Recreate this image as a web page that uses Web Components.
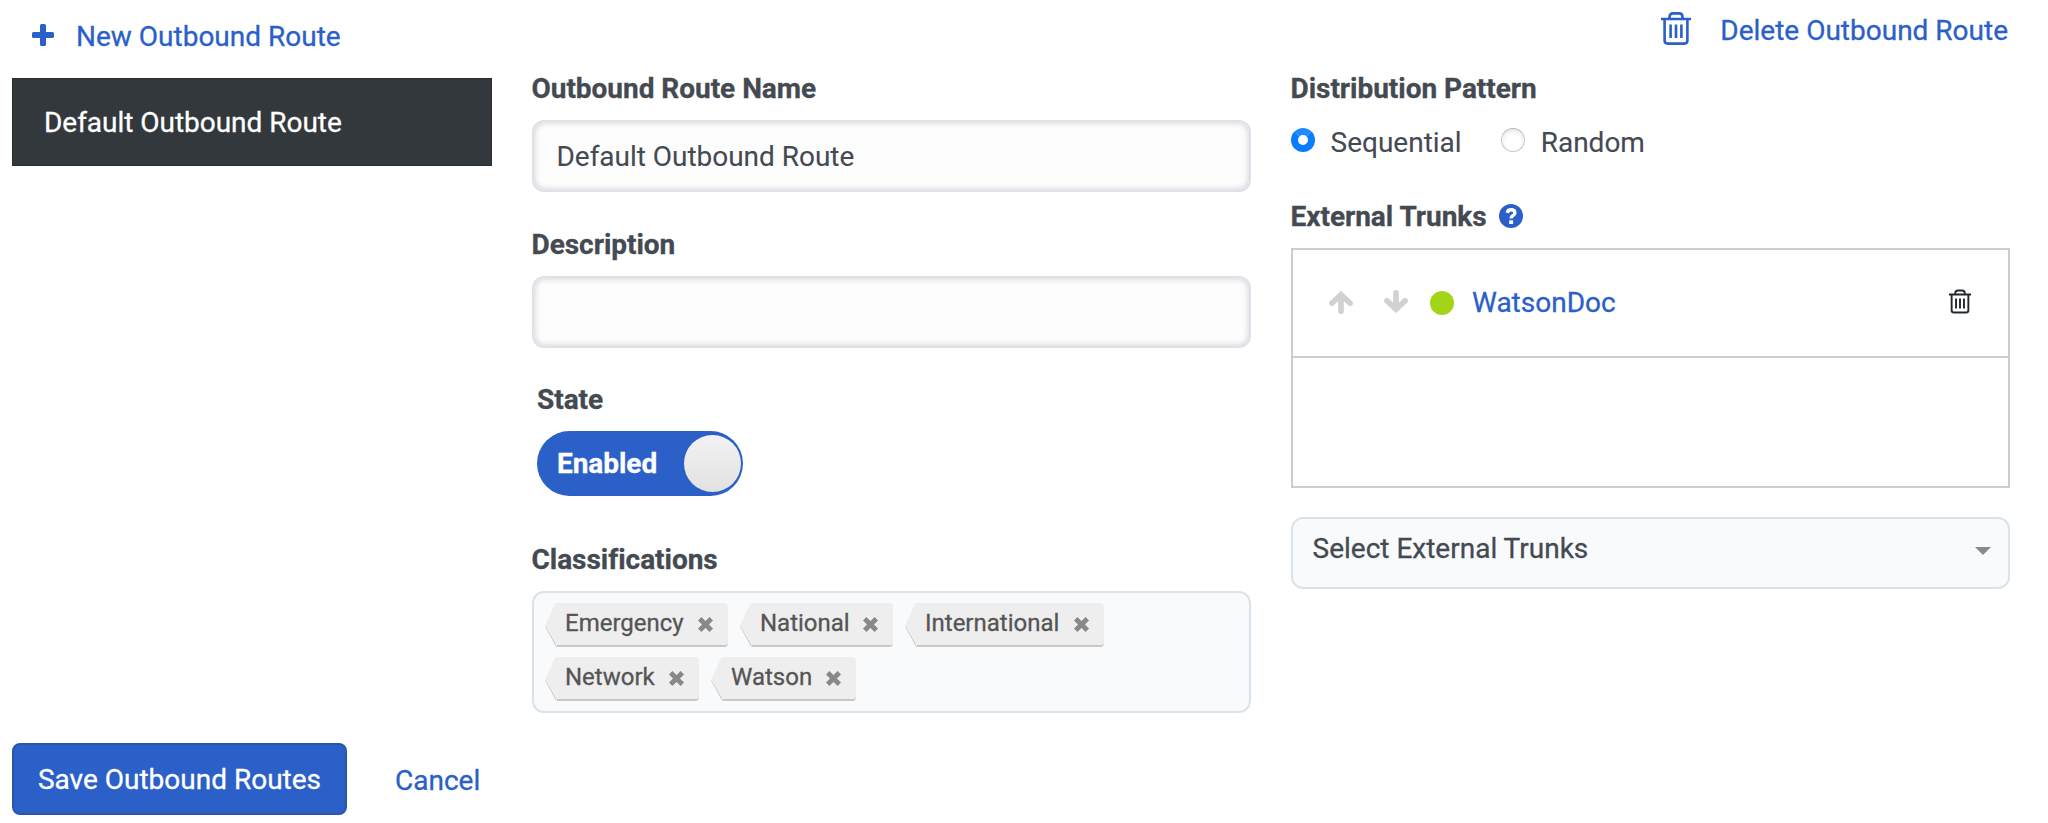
<!DOCTYPE html>
<html lang="en">
<head>
<meta charset="utf-8">
<title>Outbound Routes</title>
<style>
html, body { margin: 0; background: #fff; }
body { font-family: Roboto, "Liberation Sans", sans-serif; font-size: 28px; line-height: 36px; color: #444a52; -webkit-text-stroke: .3px currentColor; }
</style>
</head>
<body>
<routes-page></routes-page>
<script>
function define(name, html) {
  const t = document.createElement('template');
  t.innerHTML = html;
  customElements.define(name, class extends HTMLElement {
    constructor() {
      super();
      this.attachShadow({ mode: 'open' }).appendChild(t.content.cloneNode(true));
    }
  });
}

define('icon-trash', `
<style>:host{display:block;width:30px;height:33px}svg{display:block;width:100%;height:100%}</style>
<svg viewBox="0 0 30 33" fill="none" stroke="currentColor" stroke-width="2.600">
<path d="M0 7H30M8.500 7V5Q8.500 1.400 12 1.400H18Q21.500 1.400 21.500 5V7M3.600 7V28.500Q3.600 31.600 6.700 31.600H23.300Q26.400 31.600 26.400 28.500V7M9.600 12.500V26M15 12.500V26M20.400 12.500V26"/></svg>`);

define('icon-plus', `
<style>:host{display:block;width:22px;height:22px}svg{display:block}</style>
<svg width="22" height="22" viewBox="0 0 22 22" fill="currentColor"><rect x="8" width="6" height="22" rx="1.500"/><rect y="8" width="22" height="6" rx="1.500"/></svg>`);

define('icon-arrow', `
<style>:host{display:block;width:24px;height:23px;color:#d1d1d1}:host([down]){transform:rotate(180deg)}svg{display:block}</style>
<svg width="24" height="23" viewBox="0 0 24 23" fill="none" stroke="currentColor" stroke-width="5.600" stroke-linecap="round"><path d="M12 5V20.200M2.900 12.300L12 3.700L21.100 12.300" stroke-linejoin="miter"/></svg>`);

define('icon-help', `
<style>:host{display:block;width:24px;height:24px}svg{display:block}</style>
<svg width="24" height="24" viewBox="0 0 24 24"><circle cx="12" cy="12" r="12" fill="#2a60c8"/><path d="M8.200 8.800Q8.800 5.800 12.100 5.800Q15.900 5.800 15.900 8.900Q15.900 10.600 13.700 11.800Q12.100 12.700 12.100 14.500" fill="none" stroke="#fff" stroke-width="3.400"/><rect x="10.200" y="16.300" width="3.900" height="3.700" fill="#fff"/></svg>`);

define('link-action', `
<style>:host{display:flex;align-items:flex-start;color:#2a60c8;white-space:nowrap}span{padding-top:1px}</style>
<slot name="icon"></slot><span><slot></slot></span>`);

define('route-item', `
<style>:host{display:flex;align-items:center;box-sizing:border-box;height:88px;padding:2px 0 0 31px;background:#33383c;border:1px solid #2d2d2d;color:#fff;white-space:nowrap;letter-spacing:-.03px}</style>
<slot></slot>`);

define('field-label', `
<style>:host{display:flex;align-items:center;box-sizing:border-box;height:36px;padding-top:2px;font-weight:700;white-space:nowrap;letter-spacing:-.03px}</style>
<slot></slot>`);

define('text-field', `
<style>:host{display:flex;align-items:center;box-sizing:border-box;height:72px;padding:1px 23px 0;border:2px solid #dbe2ea;border-radius:12px;background:#fdfdfd;box-shadow:inset 0 0 7px rgba(0,0,0,.2);white-space:nowrap;letter-spacing:-.03px;-webkit-text-stroke-width:.1px}</style>
<slot></slot>`);

define('toggle-switch', `
<style>:host{display:flex;align-items:center;justify-content:space-between;box-sizing:border-box;width:206px;height:65px;padding:0 2px 0 20px;border-radius:33px;background:#2a60c8;color:#fff;font-weight:700;letter-spacing:-.05px}
i{display:block;width:57px;height:57px;border-radius:50%;background:linear-gradient(#f2f2f2,#e2e2e2)}</style>
<span><slot></slot></span><i></i>`);

define('tag-chip', `
<style>:host{display:grid;grid-template-columns:12px 1fr;height:46px;font-size:24px;line-height:30px;color:#555}
svg{display:block}
div{display:flex;justify-content:space-between;box-sizing:border-box;height:44px;padding:5px 15px 0 8.500px;background:#eee;border-bottom:2px solid #c8c8c8;border-radius:0 4px 4px 0;white-space:nowrap}
div svg{margin-top:9px}</style>
<svg width="12" height="46" viewBox="0 0 12 46"><path d="M0 23.500L11.500 44.500V42L1 23Z" fill="#c8c8c8"/><path d="M12 0Q10.500 0 9.800 1.500L0 22.500L12 43Z" fill="#eee"/></svg>
<div><span><slot></slot></span><svg width="15" height="15" viewBox="0 0 15 15" stroke="#888" stroke-width="4.800" fill="none"><path d="M1.700 1.700L13.300 13.300M13.300 1.700L1.700 13.300"/></svg></div>`);

define('tag-box', `
<style>:host{display:flex;flex-wrap:wrap;align-content:flex-start;gap:8px 12px;box-sizing:border-box;height:122px;padding:10px 12px 10px 11px;border:2px solid #dbe3ea;border-radius:12px;background:#f9fafc}</style>
<slot></slot>`);

define('radio-option', `
<style>:host{display:flex;white-space:nowrap;-webkit-text-stroke-width:.1px}
i{display:block;box-sizing:border-box;width:24px;height:24px;border-radius:50%;margin:1px 16px 0 0;background:#fff;border:1px solid #c8c8c8;border-top-color:#b5b5b5;box-shadow:inset 0 2px 4px rgba(0,0,0,.1)}
:host([checked]) i{border:7.500px solid #0a7dff;border-top-color:#1f8aff;box-shadow:none;background:#fff}
span{margin-top:-2px}</style>
<i></i><span><slot></slot></span>`);

define('trunk-row', `
<style>:host{display:grid;grid-template-columns:24px 24px 24px 1fr 22px;align-items:start;box-sizing:border-box;height:108px;padding:40.500px 37px 0 36px;border-bottom:2px solid #ccc}
b{display:block;width:24px;height:24px;border-radius:50%;background:#a2d417;margin-left:53.500px}
icon-arrow[down]{margin:-1px 0 0 31.500px}
a{color:#2a60c8;margin:-5.500px 0 0 71.500px}
icon-trash{width:22px;height:25px;color:#23272e;margin-top:-1.500px}</style>
<icon-arrow></icon-arrow><icon-arrow down></icon-arrow><b></b><a><slot></slot></a><icon-trash></icon-trash>`);

define('trunk-list', `
<style>:host{display:block;box-sizing:border-box;height:240px;border:2px solid #ccc}</style><slot></slot>`);

define('select-box', `
<style>:host{display:flex;justify-content:space-between;box-sizing:border-box;height:72px;padding:12px 17px 0 20px;border:2px solid #dbe3ea;border-radius:12px;background:#f9fafc;white-space:nowrap}
svg{display:block;margin-top:16px}</style>
<span><slot></slot></span><svg width="16" height="8" viewBox="0 0 16 8"><path d="M0 0H16L8 8Z" fill="#8a8a8a"/></svg>`);

define('primary-button', `
<style>:host{display:flex;align-items:center;justify-content:center;box-sizing:border-box;width:335px;height:72px;padding-top:2px;background:#2a60c8;border:2px solid #2857a8;border-radius:8px;color:#fff;white-space:nowrap}</style>
<slot></slot>`);

define('routes-page', `
<style>
:host{display:grid;grid-template-columns:479.500px 719px 719px;grid-template-rows:743px 80px;column-gap:40px;padding-left:12px;box-sizing:border-box;width:2048px;height:823px;overflow:hidden}
.side,.form,.trunks{display:flex;flex-direction:column}
.side{padding-top:18px}
.side link-action{margin:0 0 24px 20px;height:36px}
.side icon-plus{margin:6px 22px 0 0}
.form{padding-top:70px}
.form field-label{margin-bottom:14px}
.form text-field{margin-bottom:33.500px}
.state{padding-left:5.500px}
.form toggle-switch{margin-bottom:45px}
.trunks{padding-top:12px}
.trunks link-action{align-self:flex-end;margin:0 1.500px 22px 0;height:36px}
.trunks icon-trash{margin-right:29px}
.radios{display:flex;gap:39px;height:24px;margin:21px 0 47px}
.trunks icon-help{margin:-2px 0 0 12.500px}
.trunks trunk-list{margin:14px 0 29px}
footer{grid-column:1/-1;display:flex}
footer link-action{margin:19px 0 0 48px}
</style>
<div class="side">
<link-action><icon-plus slot="icon"></icon-plus>New Outbound Route</link-action>
<route-item>Default Outbound Route</route-item>
</div>
<div class="form">
<field-label>Outbound Route Name</field-label>
<text-field>Default Outbound Route</text-field>
<field-label>Description</field-label>
<text-field></text-field>
<div class="state"><field-label>State</field-label><toggle-switch>Enabled</toggle-switch></div>
<field-label>Classifications</field-label>
<tag-box>
<tag-chip style="width:183px">Emergency</tag-chip><tag-chip style="width:153px">National</tag-chip><tag-chip style="width:199px">International</tag-chip><tag-chip style="width:154px">Network</tag-chip><tag-chip style="width:145px">Watson</tag-chip>
</tag-box>
</div>
<div class="trunks">
<link-action><icon-trash slot="icon"></icon-trash>Delete Outbound Route</link-action>
<field-label>Distribution Pattern</field-label>
<div class="radios"><radio-option checked>Sequential</radio-option><radio-option>Random</radio-option></div>
<field-label>External Trunks<icon-help></icon-help></field-label>
<trunk-list><trunk-row>WatsonDoc</trunk-row></trunk-list>
<select-box>Select External Trunks</select-box>
</div>
<footer><primary-button>Save Outbound Routes</primary-button><link-action>Cancel</link-action></footer>`);
</script>
</body>
</html>
